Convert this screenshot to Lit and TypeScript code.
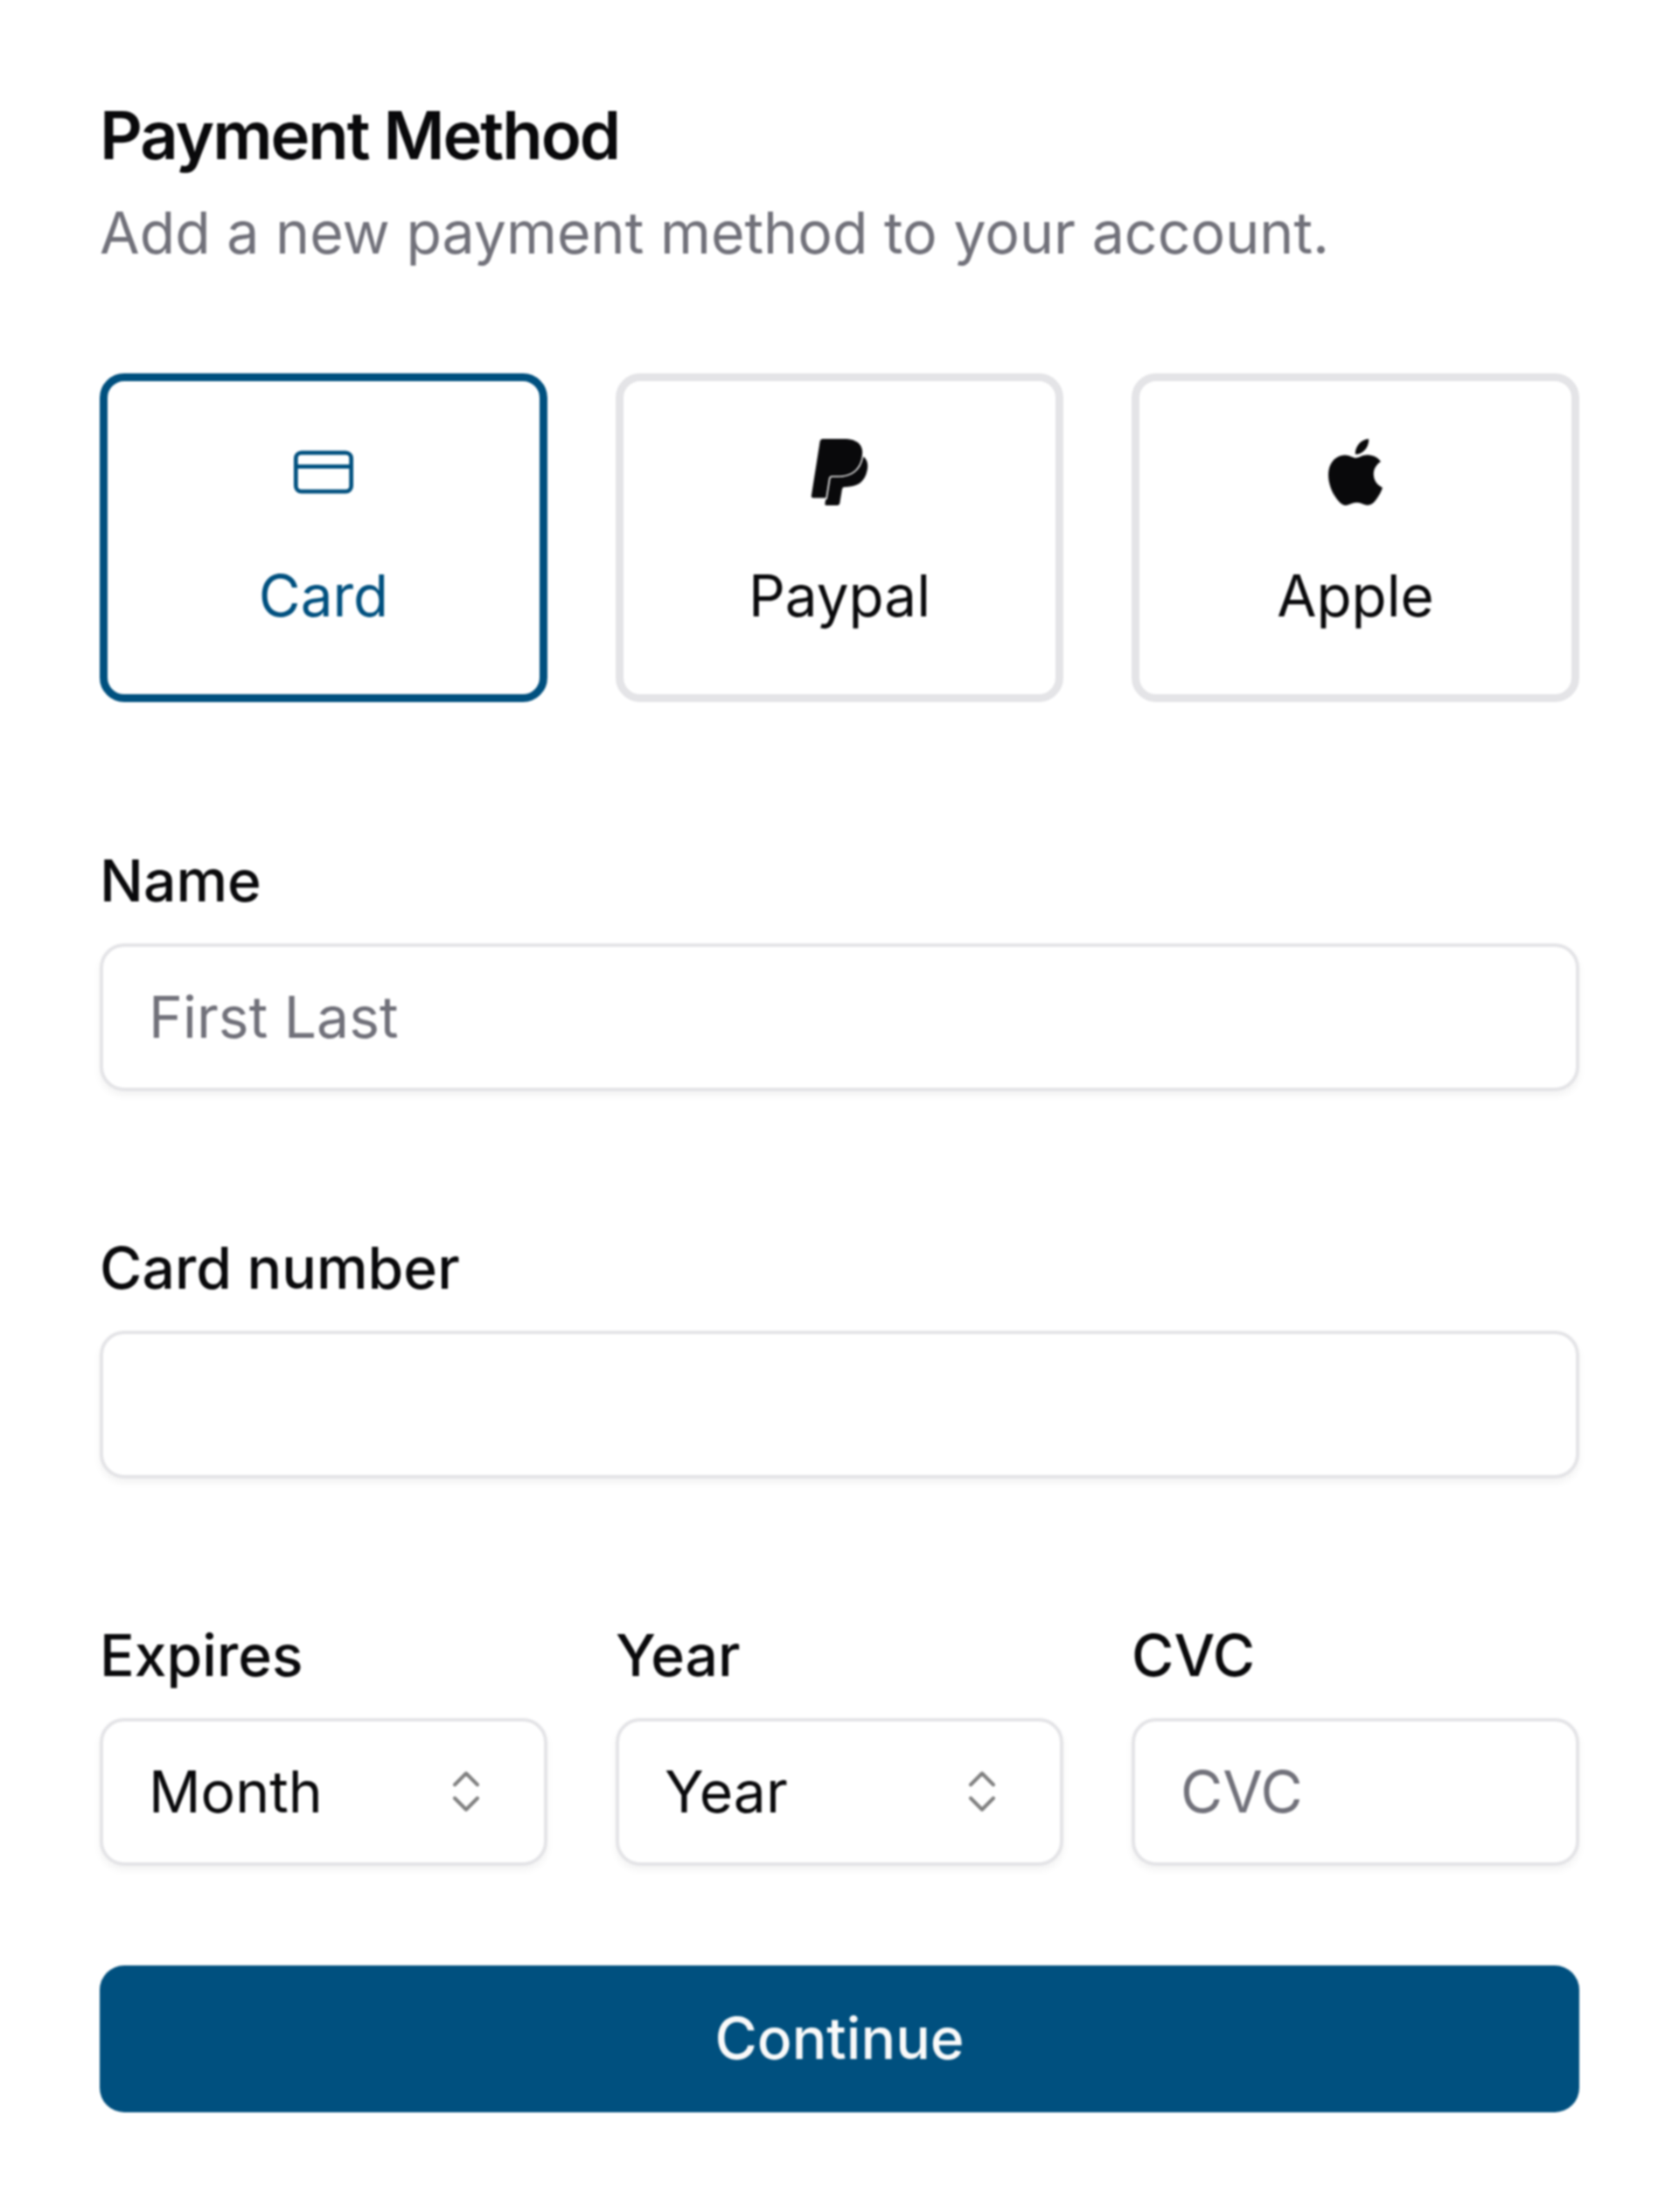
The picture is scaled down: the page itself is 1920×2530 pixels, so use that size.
import { LitElement, html, css, svg } from "lit";
import { customElement } from "lit/decorators.js";

const cardIcon = svg`<rect x="2" y="5" width="20" height="14" rx="2" fill="none" stroke="currentColor" stroke-width="1.5"/><line x1="2" y1="10" x2="22" y2="10" stroke="currentColor" stroke-width="1.5"/>`;
const paypalIcon = svg`<path fill="currentColor" d="M7.076 21.337H2.47a.641.641 0 0 1-.633-.74L4.944.901C5.026.382 5.474 0 5.998 0h7.46c2.57 0 4.578.543 5.69 1.81 1.01 1.15 1.304 2.42 1.012 4.287-.023.143-.047.288-.077.437-.983 5.05-4.349 6.797-8.647 6.797h-2.19c-.524 0-.968.382-1.05.9l-1.12 7.106zm14.146-14.42a3.35 3.35 0 0 0-.607-.541c-.013.076-.026.175-.041.254-.93 4.778-4.005 7.201-9.138 7.201h-2.19a.563.563 0 0 0-.556.479l-1.187 7.527h-.506l-.24 1.516a.56.56 0 0 0 .554.647h3.882c.46 0 .85-.334.922-.788.06-.26.76-4.852.816-5.09a.932.932 0 0 1 .923-.788h.58c3.76 0 6.705-1.528 7.565-5.946.36-1.847.174-3.388-.777-4.471z"/>`;
const appleIcon = svg`<path fill="currentColor" d="M12.152 6.896c-.948 0-2.415-1.078-3.96-1.04-2.04.027-3.91 1.183-4.961 3.014-2.117 3.675-.546 9.103 1.519 12.09 1.013 1.454 2.208 3.09 3.792 3.039 1.52-.065 2.09-.987 3.935-.987 1.831 0 2.35.987 3.96.948 1.637-.026 2.676-1.48 3.676-2.948 1.156-1.688 1.636-3.325 1.662-3.415-.039-.013-3.182-1.221-3.22-4.857-.026-3.04 2.48-4.494 2.597-4.559-1.429-2.09-3.623-2.324-4.39-2.376-2-.156-3.675 1.09-4.61 1.09zM15.53 3.83c.843-1.012 1.4-2.427 1.245-3.83-1.207.052-2.662.805-3.532 1.818-.78.896-1.454 2.338-1.273 3.714 1.338.104 2.715-.688 3.559-1.701"/>`;
const chevrons = svg`<path d="m7 15 5 5 5-5M7 9l5-5 5 5" fill="none" stroke="currentColor" stroke-width="1.6" stroke-linecap="round" stroke-linejoin="round"/>`;

@customElement("app-root")
export class AppRoot extends LitElement {
  static styles = css`
    :host {
      display: block;
      width: 1920px;
      height: 2530px;
      box-sizing: border-box;
      padding: 114px 114px 0;
      background: #fff;
      color: #09090b;
      font-family: Inter, "Liberation Sans", sans-serif;
      font-size: 66px;
      filter: blur(0.9px);
    }
    * { box-sizing: border-box; }
    h1 {
      margin: 0;
      font-size: 76px;
      font-weight: 600;
      line-height: 80px;
      letter-spacing: -2.1px;
    }
    .sub {
      margin: 25px 0 0;
      font-size: 66.2px;
      line-height: 95px;
      color: #71717a;
    }
    .tiles {
      display: grid;
      grid-template-columns: repeat(3, 1fr);
      gap: 78px;
      margin-top: 113px;
      padding-bottom: 2px;
    }
    .tile {
      height: 376px;
      padding: 0 0 14px;
      display: flex;
      flex-direction: column;
      align-items: center;
      justify-content: center;
      gap: 70px;
      background: #fff;
      border: 9px solid #e4e4e7;
      border-radius: 28px;
      font: inherit;
      font-size: 65.6px;
      color: inherit;
    }
    .tile.active {
      border-color: #00507f;
      color: #00507f;
    }
    .tile svg { width: 76px; height: 76px; display: block; }
    .tile span { line-height: 67px; }
    .field { margin-top: 169px; }
    .label {
      display: block;
      line-height: 67px;
      font-weight: 500;
      margin-bottom: 38px;
    }
    .box {
      height: 169px;
      display: flex;
      align-items: center;
      justify-content: space-between;
      padding: 0 58px 2px 52px;
      background: #fff;
      border: 4px solid #e4e4e7;
      border-radius: 28px;
      box-shadow: 0 5px 8px rgba(0, 0, 0, 0.05);
    }
    .placeholder { color: #71717a; }
    .box svg { width: 62px; height: 62px; color: #808080; display: block; }
    .row {
      display: grid;
      grid-template-columns: repeat(3, 1fr);
      gap: 78px;
      margin-top: 169px;
    }
    .row .field { margin-top: 0; }
    .continue {
      display: block;
      width: 100%;
      height: 168px;
      margin-top: 114px;
      padding: 0 0 3px;
      border: 0;
      border-radius: 28px;
      background: #00507f;
      color: #fafafa;
      font: inherit;
      font-weight: 500;
    }
  `;

  private tile(label: string, icon: unknown, active = false) {
    return html`<button class="tile ${active ? "active" : ""}">
      <svg viewBox="0 0 24 24">${icon}</svg>
      <span>${label}</span>
    </button>`;
  }

  private select(label: string, value: string) {
    return html`<div class="field">
      <span class="label">${label}</span>
      <div class="box">
        <span>${value}</span>
        <svg viewBox="0 0 24 24">${chevrons}</svg>
      </div>
    </div>`;
  }

  render() {
    return html`
      <h1>Payment Method</h1>
      <p class="sub">Add a new payment method to your account.</p>
      <div class="tiles">
        ${this.tile("Card", cardIcon, true)}
        ${this.tile("Paypal", paypalIcon)}
        ${this.tile("Apple", appleIcon)}
      </div>
      <div class="field">
        <span class="label">Name</span>
        <div class="box"><span class="placeholder">First Last</span></div>
      </div>
      <div class="field">
        <span class="label">Card number</span>
        <div class="box"></div>
      </div>
      <div class="row">
        ${this.select("Expires", "Month")}
        ${this.select("Year", "Year")}
        <div class="field">
          <span class="label">CVC</span>
          <div class="box"><span class="placeholder">CVC</span></div>
        </div>
      </div>
      <button class="continue">Continue</button>
    `;
  }
}
